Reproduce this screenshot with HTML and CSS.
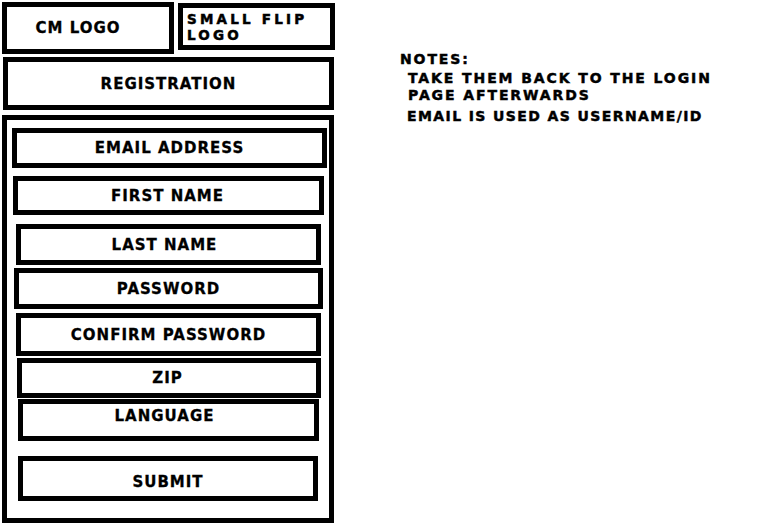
FILE: index.html
```html
<!DOCTYPE html>
<html>
<head>
  <title>Registration wireframe</title>
  <meta charset="utf-8">
  <meta name="viewport" content="width=device-width, initial-scale=1.0">
  <link rel="stylesheet" href="styles.css">
</head>
<body>
  <div class="page">
    <div class="screen">
      <div class="header">
        <div class="box cm-logo">CM LOGO</div>
        <div class="box flip-logo">SMALL FLIP<br>LOGO</div>
      </div>
      <div class="box title">REGISTRATION</div>
      <div class="box form">
        <div class="box field f-email">EMAIL ADDRESS</div>
        <div class="box field f-first">FIRST NAME</div>
        <div class="box field f-last">LAST NAME</div>
        <div class="box field f-pass">PASSWORD</div>
        <div class="box field f-confirm">CONFIRM PASSWORD</div>
        <div class="box field f-zip">ZIP</div>
        <div class="box field f-lang">LANGUAGE</div>
        <div class="box field f-submit">SUBMIT</div>
      </div>
    </div>

    <div class="notes">
      <div class="notes-title">NOTES:</div>
      <div class="note">TAKE THEM BACK TO THE LOGIN<br>PAGE AFTERWARDS</div>
      <div class="note note-2">EMAIL IS USED AS USERNAME/ID</div>
    </div>
  </div>
</body>
</html>
```

FILE: styles.css
```css
body {
  margin: 0;
  background: white;
  color: black;
  font-family: "DejaVu Sans", sans-serif;
  font-weight: bold;
  font-size: 15px;
  letter-spacing: 1px;
  -webkit-text-stroke: 0.3px black;
}
.page {
  display: flex;
  align-items: flex-start;
}
.screen {
  width: 336px;
  padding-top: 2px;
}
.box {
  box-sizing: border-box;
  border: 5px solid black;
  display: flex;
  align-items: center;
  justify-content: center;
  text-align: center;
}
.header {
  display: flex;
  align-items: flex-start;
}
.cm-logo {
  width: 172px;
  height: 52px;
  margin-left: 2px;
  padding-right: 20px;
}
.flip-logo {
  width: 157px;
  height: 47px;
  margin: 1px 0 0 4px;
  justify-content: flex-start;
  align-items: flex-start;
  text-align: left;
  padding: 3px 0 0 4px;
  font-size: 13.5px;
  line-height: 16px;
  letter-spacing: 3.2px;
  -webkit-text-stroke: 0.5px black;
}
.title {
  width: 331px;
  height: 53px;
  margin: 3px 0 0 3px;
}
.form {
  width: 332px;
  height: 408px;
  margin: 5px 0 0 2px;
  flex-direction: column;
  align-items: flex-start;
  justify-content: flex-start;
}
.f-email   { width: 315px; height: 40px; margin: 8px 0 0 5px; }
.f-first   { width: 311px; height: 39px; margin: 8px 0 0 6px; padding-right: 2px; }
.f-last    { width: 305px; height: 41px; margin: 9px 0 0 9px; padding-right: 8px; }
.f-pass    { width: 309px; height: 41px; margin: 3px 0 0 7px; }
.f-confirm { width: 305px; height: 43px; margin: 4px 0 0 9px; }
.f-zip     { width: 304px; height: 40px; margin: 2px 0 0 10px; padding-right: 3px; }
.f-lang    { width: 301px; height: 42px; margin: 1px 0 0 11px; align-items: flex-start; padding: 3px 8px 0 0; }
.f-submit  { width: 300px; height: 45px; margin: 15px 0 0 11px; padding-top: 6px; }
.notes {
  margin: 51px 0 0 64px;
  font-size: 14px;
  line-height: 17px;
  letter-spacing: 1.9px;
  -webkit-text-stroke: 0.45px black;
}
.note {
  margin: 2px 0 0 8px;
}
.note-2 {
  margin: 4px 0 0 7px;
  letter-spacing: 1.4px;
}
```
